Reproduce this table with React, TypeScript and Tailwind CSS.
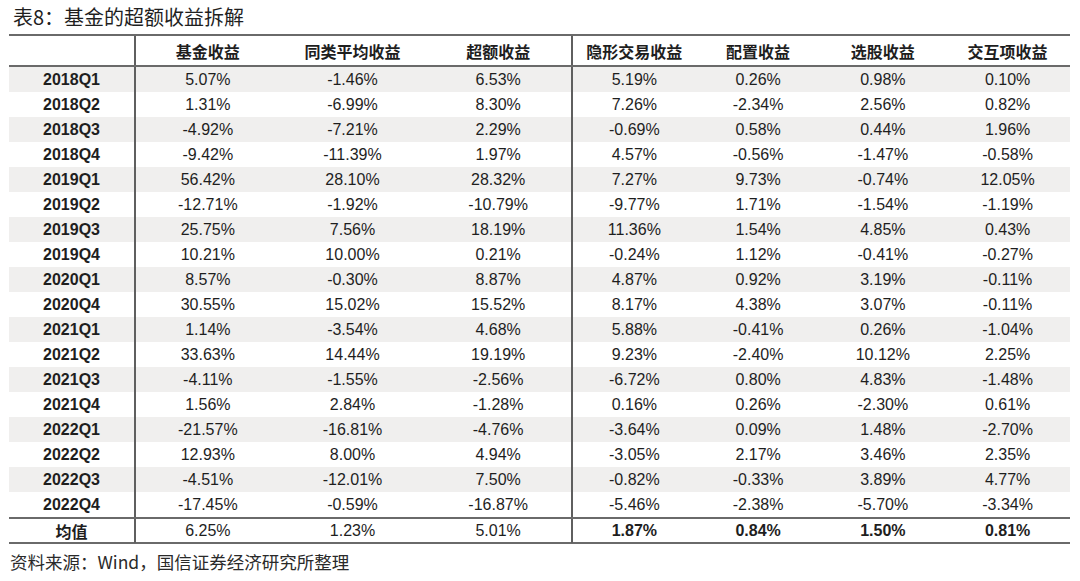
const cjk = "font-[family-name:'Noto_Sans_CJK_SC',sans-serif]";
const num = "font-[family-name:'Liberation_Sans',Arial,sans-serif]";

const headers = ["基金收益", "同类平均收益", "超额收益", "隐形交易收益", "配置收益", "选股收益", "交互项收益"];

const rows: [string, string[]][] = [
  ["2018Q1", ["5.07%", "-1.46%", "6.53%", "5.19%", "0.26%", "0.98%", "0.10%"]],
  ["2018Q2", ["1.31%", "-6.99%", "8.30%", "7.26%", "-2.34%", "2.56%", "0.82%"]],
  ["2018Q3", ["-4.92%", "-7.21%", "2.29%", "-0.69%", "0.58%", "0.44%", "1.96%"]],
  ["2018Q4", ["-9.42%", "-11.39%", "1.97%", "4.57%", "-0.56%", "-1.47%", "-0.58%"]],
  ["2019Q1", ["56.42%", "28.10%", "28.32%", "7.27%", "9.73%", "-0.74%", "12.05%"]],
  ["2019Q2", ["-12.71%", "-1.92%", "-10.79%", "-9.77%", "1.71%", "-1.54%", "-1.19%"]],
  ["2019Q3", ["25.75%", "7.56%", "18.19%", "11.36%", "1.54%", "4.85%", "0.43%"]],
  ["2019Q4", ["10.21%", "10.00%", "0.21%", "-0.24%", "1.12%", "-0.41%", "-0.27%"]],
  ["2020Q1", ["8.57%", "-0.30%", "8.87%", "4.87%", "0.92%", "3.19%", "-0.11%"]],
  ["2020Q4", ["30.55%", "15.02%", "15.52%", "8.17%", "4.38%", "3.07%", "-0.11%"]],
  ["2021Q1", ["1.14%", "-3.54%", "4.68%", "5.88%", "-0.41%", "0.26%", "-1.04%"]],
  ["2021Q2", ["33.63%", "14.44%", "19.19%", "9.23%", "-2.40%", "10.12%", "2.25%"]],
  ["2021Q3", ["-4.11%", "-1.55%", "-2.56%", "-6.72%", "0.80%", "4.83%", "-1.48%"]],
  ["2021Q4", ["1.56%", "2.84%", "-1.28%", "0.16%", "0.26%", "-2.30%", "0.61%"]],
  ["2022Q1", ["-21.57%", "-16.81%", "-4.76%", "-3.64%", "0.09%", "1.48%", "-2.70%"]],
  ["2022Q2", ["12.93%", "8.00%", "4.94%", "-3.05%", "2.17%", "3.46%", "2.35%"]],
  ["2022Q3", ["-4.51%", "-12.01%", "7.50%", "-0.82%", "-0.33%", "3.89%", "4.77%"]],
  ["2022Q4", ["-17.45%", "-0.59%", "-16.87%", "-5.46%", "-2.38%", "-5.70%", "-3.34%"]],
];

const mean = ["6.25%", "1.23%", "5.01%", "1.87%", "0.84%", "1.50%", "0.81%"];

const grid = "grid grid-cols-[125px_repeat(3,145.67px)_repeat(4,124.75px)]";

// vertical rules sit left of column 1 and column 4
function cellCls(i: number) {
  const divider = i === 1 || i === 4 ? "border-l-2 border-[#5f5f5f]" : "";
  return `flex items-center justify-center ${divider}`;
}

export default function App() {
  return (
    <div className="w-[1080px] h-[581px] bg-white text-[#1e1e1e]">
      <div className={`h-[34px] pl-[13px] flex items-center text-[20px] text-[#1f1f1f] ${cjk}`}>
        表8：基金的超额收益拆解
      </div>

      <div className="ml-[9px] w-[1061px] border-t-2 border-[#6a6a6a]">
        {/* header */}
        <div className={`${grid} h-[31px] border-b-2 border-[#6a6a6a]`}>
          <div className={cellCls(0)} />
          {headers.map((h, i) => (
            <div key={h} className={`${cellCls(i + 1)} text-[16px] font-bold ${cjk}`}>
              {h}
            </div>
          ))}
        </div>

        {rows.map(([label, vals], r) => (
          <div key={label} className={`${grid} h-[25px] ${r % 2 === 0 ? "bg-[#f0efee]" : "bg-white"}`}>
            <div className={`${cellCls(0)} text-[16px] font-bold ${num}`}>{label}</div>
            {vals.map((v, i) => (
              <div key={i} className={`${cellCls(i + 1)} text-[16px] ${num}`}>
                {v}
              </div>
            ))}
          </div>
        ))}

        {/* average row */}
        <div className={`${grid} h-[27px] border-t-2 border-b-2 border-[#6a6a6a]`}>
          <div className={`${cellCls(0)} text-[16px] font-bold ${cjk}`}>均值</div>
          {mean.map((v, i) => (
            <div key={i} className={`${cellCls(i + 1)} text-[16px] ${i >= 3 ? "font-bold" : ""} ${num}`}>
              {v}
            </div>
          ))}
        </div>
      </div>

      <div className={`h-[37px] pl-[10px] flex items-center text-[17.5px] text-[#2a2a2a] ${cjk}`}>
        资料来源：Wind，国信证券经济研究所整理
      </div>
    </div>
  );
}
